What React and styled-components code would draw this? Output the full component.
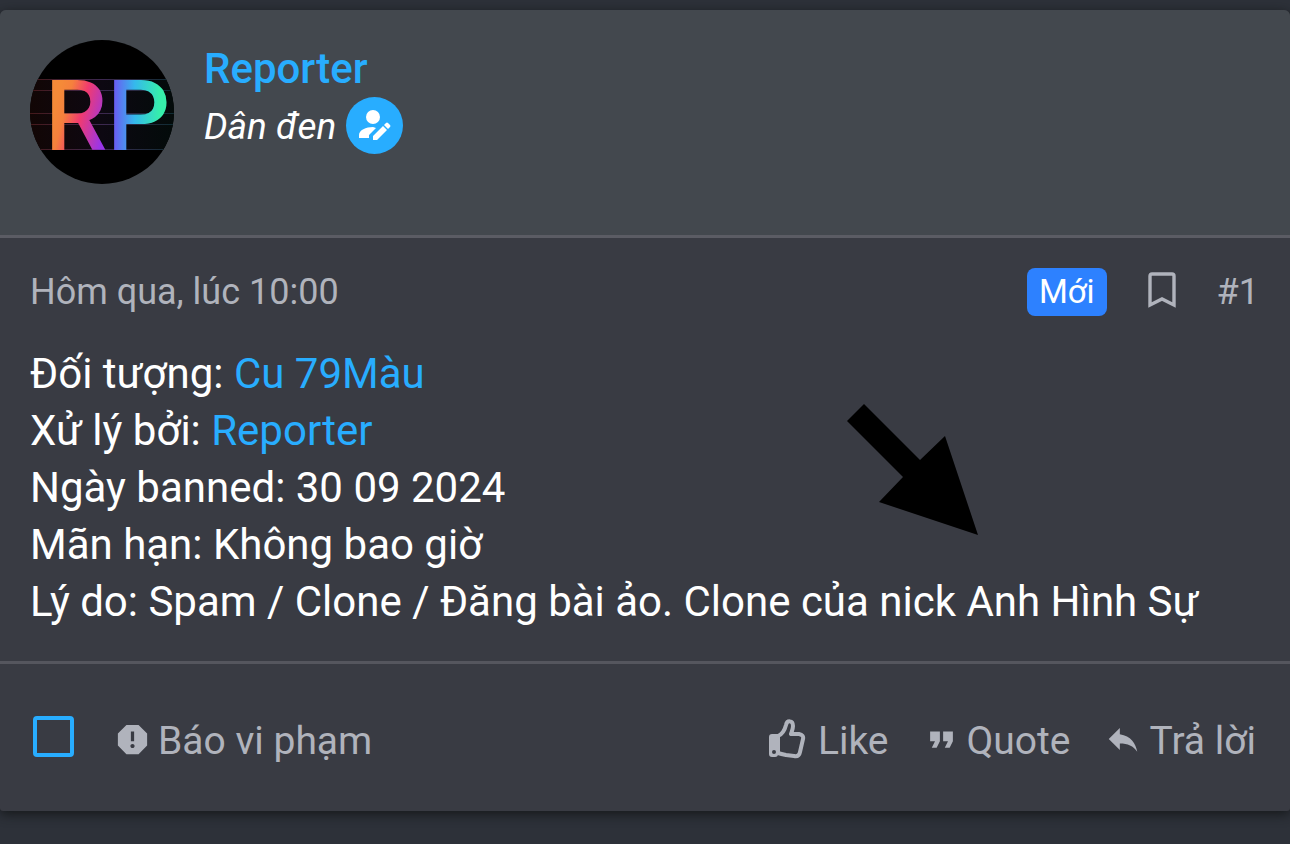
import styled, { createGlobalStyle } from 'styled-components'
import { MdReport, MdFormatQuote, MdReply } from 'react-icons/md'

const GlobalStyle = createGlobalStyle`
  * { box-sizing: border-box; }
  body {
    margin: 0;
    background: #2d3139;
    color: #fff;
    font-family: Roboto, 'Noto Sans', sans-serif;
  }
`

const Page = styled.main`
  padding: 10px 0 33px;
`

const Post = styled.article`
  background: #393b43;
  border-radius: 6px 6px 3px 3px;
  box-shadow: 0 3px 12px #15181a;
`

const UserBar = styled.header`
  display: flex;
  gap: 30px;
  min-height: 228px;
  padding: 30px;
  background: #43484e;
  border-bottom: 3px solid #5b5c64;
  border-radius: 6px 6px 0 0;
`

const Avatar = styled.svg`
  flex: none;
  width: 144px;
  height: 144px;
  border-radius: 50%;
  background: #000;
`

const UserName = styled.a`
  display: block;
  color: #28adff;
  font-size: 42px;
  font-weight: 500;
  line-height: 57px;
  text-decoration: none;
`

const UserTitle = styled.div`
  display: flex;
  align-items: flex-start;
  gap: 10px;
  font-size: 37px;
  font-style: italic;
  line-height: 60px;
`

const StarterBadge = styled.span`
  display: grid;
  place-items: center;
  width: 57px;
  height: 57px;
  border-radius: 50%;
  background: #28adff;
`

const Row = styled.div`
  display: flex;
  align-items: center;
  justify-content: space-between;
  color: #b0b3bc;
`

const Meta = styled(Row)`
  padding: 30px 31px 0 30px;
  font-size: 36px;
  line-height: 48px;
`

const Group = styled.div`
  display: flex;
  align-items: center;
  gap: ${(p) => p.$gap}px;
`

const NewLabel = styled.span`
  padding: 0 12px;
  border-radius: 8px;
  background: #2d81ff;
  color: #fff;
  font-size: 33px;
`

const PlainLink = styled.a`
  color: inherit;
  text-decoration: none;
`

const Action = styled.button`
  display: flex;
  align-items: center;
  gap: ${(p) => p.$gap || 8}px;
  padding: 0;
  border: 0;
  background: none;
  color: inherit;
  font: inherit;
  cursor: pointer;

  svg {
    margin-bottom: 4px;
  }
`

const Body = styled.div`
  position: relative;
  padding: 29px 30px 31px;
  border-bottom: 3px solid #55565e;
  font-size: 42px;
  line-height: 57px;

  p {
    margin: 0;
  }

  a {
    color: #28adff;
    text-decoration: none;
  }
`

const Pointer = styled.svg`
  position: absolute;
  top: 88px;
  right: 312px;
  width: 131px;
  height: 131px;
`

const Footer = styled(Row)`
  padding: 49px 34px 42px 33px;
  font-size: 39px;
  line-height: 56px;
`

const Check = styled.input`
  appearance: none;
  width: 41px;
  height: 41px;
  margin: 0 0 10px;
  border: 4px solid #28adff;
  border-radius: 4px;
`

const ThumbIcon = () => (
  <svg width="38" height="40" viewBox="0 0 38 40" fill="none" stroke="currentColor" strokeWidth="4" strokeLinejoin="round">
    <path d="M10 17C15 15 17 10 18 6C19 1 25 1 25 7C25 10 24 12 23 15H31Q36 16 35 20L32 33Q31 38 26 37L18 36Q13 35 10 34Z" />
    <path fill="currentColor" fillRule="evenodd" stroke="none" d="M4 15H10V35Q10 38 7 38H4Q1 38 1 35V18Q1 15 4 15ZM6 31A2 2 0 1 0 6 35A2 2 0 1 0 6 31Z" />
  </svg>
)

const BookmarkIcon = () => (
  <svg width="28" height="36" viewBox="0 0 28 36" fill="none" stroke="currentColor" strokeWidth="3.4">
    <path d="M2 33V4Q2 2 4 2H24Q26 2 26 4V33L14 27Z" />
  </svg>
)

const UserEditIcon = () => (
  <svg width="32" height="31" viewBox="0 0 32 31" fill="#fff">
    <circle cx="14" cy="7" r="7" />
    <path d="M0 28V25C0 20 7 17 14 17L17 18L10 25V28Z" />
    <path d="M14 30V26L24 16L28 20L18 30ZM25 15L27 13Q28 12 29 13L31 15Q32 16 31 17L29 19Z" />
  </svg>
)

const lines = [
  { label: 'Đối tượng:', link: 'Cu 79Màu' },
  { label: 'Xử lý bởi:', link: 'Reporter' },
  { label: 'Ngày banned:', text: '30 09 2024' },
  { label: 'Mãn hạn:', text: 'Không bao giờ' },
  { label: 'Lý do:', text: 'Spam / Clone / Đăng bài ảo. Clone của nick Anh Hình Sự' },
]

const Logo = () => (
  <Avatar viewBox="0 0 144 144" role="img" aria-label="RP">
    <defs>
      <linearGradient id="warm" gradientUnits="userSpaceOnUse" x1="24" y1="70" x2="76" y2="84">
        <stop offset="0" stopColor="#f58a38" />
        <stop offset="0.2" stopColor="#f5803d" />
        <stop offset="0.5" stopColor="#f13b6f" />
        <stop offset="1" stopColor="#9a35e8" />
      </linearGradient>
      <linearGradient id="cool" gradientUnits="userSpaceOnUse" x1="84" y1="0" x2="130" y2="0">
        <stop offset="0" stopColor="#6a5cf2" />
        <stop offset="0.45" stopColor="#35b9ec" />
        <stop offset="1" stopColor="#36efaa" />
      </linearGradient>
      <linearGradient id="line">
        <stop offset="0" stopColor="#45191a" />
        <stop offset="0.5" stopColor="#3d2850" />
        <stop offset="1" stopColor="#0f2c33" />
      </linearGradient>
      <linearGradient id="glow">
        <stop offset="0" stopColor="#120605" />
        <stop offset="0.5" stopColor="#0d0812" />
        <stop offset="1" stopColor="#030b0a" />
      </linearGradient>
    </defs>
    <rect y="39" width="144" height="71" fill="url(#glow)" />
    {[39, 50, 73, 84, 109].map((y) => (
      <rect key={y} y={y} width="144" height="1" fill="url(#line)" />
    ))}
    <g fontFamily="Roboto, sans-serif" fontSize="99" fontWeight="500">
      <text x="15" y="110" fill="url(#warm)">R</text>
      <text x="77" y="110" fill="url(#cool)">P</text>
    </g>
  </Avatar>
)

export default function App() {
  return (
    <>
      <GlobalStyle />
      <Page>
        <Post>
          <UserBar>
            <Logo />
            <div>
              <UserName href="#reporter">Reporter</UserName>
              <UserTitle>
                Dân đen
                <StarterBadge>
                  <UserEditIcon />
                </StarterBadge>
              </UserTitle>
            </div>
          </UserBar>
          <Meta>
            <PlainLink href="#post-1">Hôm qua, lúc 10:00</PlainLink>
            <Group $gap={41}>
              <NewLabel>Mới</NewLabel>
              <Action aria-label="Bookmark">
                <BookmarkIcon />
              </Action>
              <PlainLink href="#post-1">#1</PlainLink>
            </Group>
          </Meta>
          <Body>
            {lines.map(({ label, link, text }) => (
              <p key={label}>
                {label} {link ? <a href="#member">{link}</a> : text}
              </p>
            ))}
            <Pointer viewBox="0 0 131 131">
              <path d="M17 0L73 56L98 32L131 131L32 98L56 73L0 17Z" />
            </Pointer>
          </Body>
          <Footer>
            <Group $gap={39}>
              <Check type="checkbox" aria-label="Chọn bài viết" />
              <Action $gap={6}>
                <MdReport size={39} />
                Báo vi phạm
              </Action>
            </Group>
            <Group $gap={33}>
              <Action $gap={12}>
                <ThumbIcon />
                Like
              </Action>
              <Action $gap={6}>
                <MdFormatQuote size={39} />
                Quote
              </Action>
              <Action>
                <MdReply size={38} />
                Trả lời
              </Action>
            </Group>
          </Footer>
        </Post>
      </Page>
    </>
  )
}
